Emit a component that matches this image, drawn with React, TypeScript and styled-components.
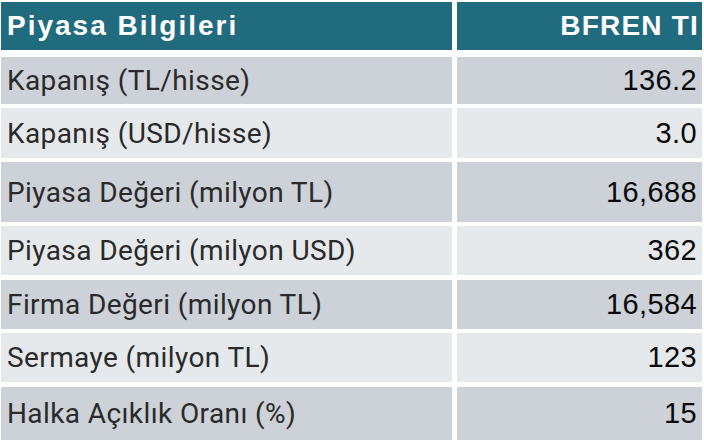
import React from "react";
import styled, { createGlobalStyle } from "styled-components";

const GlobalStyle = createGlobalStyle`
  html, body {
    margin: 0;
    padding: 0;
    background: #ffffff;
  }
`;

type Item = { label: string; value: string; height: number; top: number };

const rows: Item[] = [
  { label: "Kapanış (TL/hisse)", value: "136.2", height: 47, top: 7 },
  { label: "Kapanış (USD/hisse)", value: "3.0", height: 50, top: 4 },
  { label: "Piyasa Değeri (milyon TL)", value: "16,688", height: 60, top: 4 },
  { label: "Piyasa Değeri (milyon USD)", value: "362", height: 49, top: 4 },
  { label: "Firma Değeri (milyon TL)", value: "16,584", height: 49, top: 5 },
  { label: "Sermaye (milyon TL)", value: "123", height: 49, top: 4 },
  { label: "Halka Açıklık Oranı (%)", value: "15", height: 53, top: 5 },
];

const Page = styled.div`
  width: 704px;
  height: 440px;
  overflow: hidden;
  padding: 2px 2px 0 1px;
  box-sizing: border-box;
  display: flex;
  flex-direction: column;
`;

const Row = styled.div<{ $h: number; $mt: number }>`
  display: grid;
  grid-template-columns: 451px 1fr;
  column-gap: 5px;
  height: ${(p) => p.$h}px;
  margin-top: ${(p) => p.$mt}px;
  flex-shrink: 0;
`;

const HeadCell = styled.div<{ $right?: boolean; $ls: number }>`
  background: #216b7f;
  color: #ffffff;
  font-family: "Liberation Sans", Arial, sans-serif;
  font-weight: 700;
  font-size: 28px;
  letter-spacing: ${(p) => p.$ls}px;
  display: flex;
  align-items: flex-end;
  justify-content: ${(p) => (p.$right ? "flex-end" : "flex-start")};
  padding: 0 ${(p) => (p.$right ? 3 : 0)}px 8px ${(p) => (p.$right ? 0 : 6)}px;
  white-space: nowrap;
`;

const Cell = styled.div<{ $shade: boolean }>`
  background: ${(p) => (p.$shade ? "#cdd1d8" : "#e6e9ec")};
  display: flex;
  align-items: center;
  white-space: nowrap;
`;

const Label = styled(Cell)`
  font-family: Roboto, "Noto Sans", sans-serif;
  font-weight: 400;
  font-size: 28px;
  letter-spacing: 0.4px;
  color: #2a2a2a;
  padding-left: 6px;
`;

const Value = styled(Cell)`
  font-family: "Liberation Sans", Arial, sans-serif;
  font-size: 29px;
  letter-spacing: 0.4px;
  color: #0a0a0a;
  justify-content: flex-end;
  padding-right: 5px;
`;

export default function App() {
  return (
    <>
      <GlobalStyle />
      <Page>
        <Row $h={48} $mt={0}>
          <HeadCell $ls={2}>Piyasa Bilgileri</HeadCell>
          <HeadCell $right $ls={1.2}>BFREN TI</HeadCell>
        </Row>
        {rows.map((r, i) => (
          <Row key={r.label} $h={r.height} $mt={r.top}>
            <Label $shade={i % 2 === 0}>{r.label}</Label>
            <Value $shade={i % 2 === 0}>{r.value}</Value>
          </Row>
        ))}
      </Page>
    </>
  );
}
